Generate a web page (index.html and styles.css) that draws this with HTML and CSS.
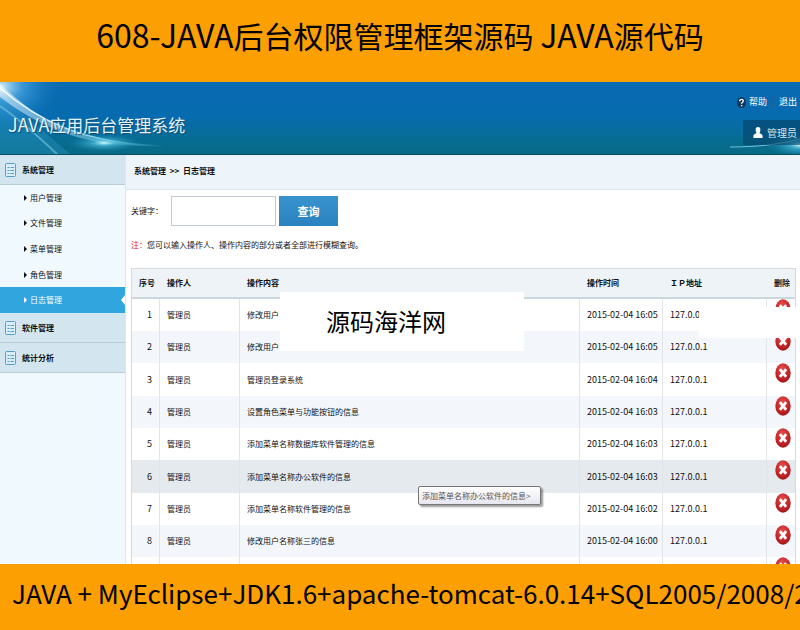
FILE: index.html
```html
<!DOCTYPE html>
<html lang="zh-CN">
<head>
    <meta charset="UTF-8">
    <meta name="viewport" content="width=device-width, initial-scale=1.0">
    <title>JAVA应用后台管理系统</title>
    <link rel="stylesheet" href="styles.css">
</head>
<body>
    <!-- Shared icons -->
    <svg class="sprite" aria-hidden="true">
        <defs>
            <radialGradient id="redBall" cx="45%" cy="30%" r="75%">
                <stop offset="0" stop-color="#e2504c"/>
                <stop offset="0.6" stop-color="#c5262a"/>
                <stop offset="1" stop-color="#9c1519"/>
            </radialGradient>
        </defs>
        <symbol id="delete" viewBox="0 0 16 20" preserveAspectRatio="none">
            <ellipse cx="8" cy="10" rx="7.7" ry="9.7" fill="url(#redBall)"/>
            <path d="M5.8 7.3 10.2 12.7M10.2 7.3 5.8 12.7" stroke="#fff" stroke-width="2.8" stroke-linecap="square"/>
        </symbol>
        <symbol id="list" viewBox="0 0 12 14">
            <rect x="0.5" y="0.5" width="10" height="13" rx="1" fill="#d9edf8" stroke="#5a9fc4"/>
            <path d="M2.5 4.5h2M2.5 7.5h2M2.5 10.5h2M5.5 4.5h3.5M5.5 7.5h3.5M5.5 10.5h3.5" stroke="#5a9fc4"/>
        </symbol>
    </svg>

    <div class="banner">
        <h1><span class="latin">608-JAVA</span>后台权限管理框架源码 <span class="latin">JAVA</span>源代码</h1>
    </div>

    <header class="header">
        <svg class="glow glow-left" viewBox="0 0 190 73" aria-hidden="true">
            <defs>
                <radialGradient id="corner" cx="0" cy="0.1" r="1">
                    <stop offset="0" stop-color="#e8f8ff" stop-opacity="0.95"/>
                    <stop offset="0.35" stop-color="#58b4ee" stop-opacity="0.6"/>
                    <stop offset="1" stop-color="#0a6db5" stop-opacity="0"/>
                </radialGradient>
                <radialGradient id="spark">
                    <stop offset="0" stop-color="#d8ffff" stop-opacity="0.95"/>
                    <stop offset="0.3" stop-color="#5fd0ee" stop-opacity="0.6"/>
                    <stop offset="1" stop-color="#1b8cb5" stop-opacity="0"/>
                </radialGradient>
                <linearGradient id="trail">
                    <stop offset="0" stop-color="#fff"/>
                    <stop offset="0.6" stop-color="#9fe4fa" stop-opacity="0.9"/>
                    <stop offset="1" stop-color="#4fc0e0" stop-opacity="0"/>
                </linearGradient>
            </defs>
            <rect width="65" height="45" fill="url(#corner)"/>
            <path d="M0 14C22 28 48 55 72 73H0Z" fill="#2f9bc9" opacity="0.35"/>
            <path d="M0 2C35 34 75 64 165 64 80 67 36 42 0 15Z" fill="url(#trail)" opacity="0.5"/>
            <path d="M0 6C35 36 80 62 165 64" fill="none" stroke="url(#trail)" stroke-width="1.5"/>
            <path d="M0 24C20 38 36 52 58 73" fill="none" stroke="#8fd4ec" stroke-width="2" opacity="0.5"/>
            <ellipse cx="104" cy="61" rx="36" ry="9" fill="url(#spark)"/>
        </svg>
        <svg class="glow glow-right" viewBox="0 0 70 24" aria-hidden="true">
            <ellipse cx="70" cy="15" rx="34" ry="12" fill="url(#spark)"/>
            <path d="M0 17C30 17 50 14 70 9" fill="none" stroke="#9fe4fa" opacity="0.7"/>
        </svg>
        <h2><span class="latin">JAVA</span>应用后台管理系统</h2>
        <div class="tools">
            <nav class="links">
                <a href="#help">
                    <svg width="9" height="11" viewBox="0 0 9 11" aria-hidden="true">
                        <ellipse cx="4.5" cy="5.5" rx="4.5" ry="5.5" fill="#15395a"/>
                        <path d="M2.7 4.2C2.7 1.6 6.4 1.8 6.3 4 6.2 5.2 4.6 5.3 4.6 6.8M4.6 8v1.3" fill="none" stroke="#fff" stroke-width="1.3"/>
                    </svg>帮助</a>
                <a href="#logout">退出</a>
            </nav>
            <div class="user">
                <svg width="10" height="11" viewBox="0 0 10 11" aria-hidden="true">
                    <path d="M5 0C7 0 7.6 1.6 7.3 3.4 7.1 4.8 6.6 5.2 6.6 6 7 7 9.6 6.8 9.6 9.3V11H0.4V9.3C0.4 6.8 3 7 3.4 6 3.4 5.2 2.9 4.8 2.7 3.4 2.4 1.6 3 0 5 0Z" fill="#fff"/>
                </svg>管理员</div>
        </div>
    </header>

    <div class="main">
        <aside class="sidebar">
            <h3><svg width="12" height="14"><use href="#list"/></svg>系统管理</h3>
            <ul>
                <li><a href="#user">用户管理</a></li>
                <li><a href="#file">文件管理</a></li>
                <li><a href="#menu">菜单管理</a></li>
                <li><a href="#role">角色管理</a></li>
                <li class="active"><a href="#log">日志管理</a></li>
            </ul>
            <h3><svg width="12" height="14"><use href="#list"/></svg>软件管理</h3>
            <h3><svg width="12" height="14"><use href="#list"/></svg>统计分析</h3>
        </aside>

        <section class="content">
            <div class="crumbs">系统管理 <span>&gt;&gt;</span> 日志管理</div>
            <form class="search">
                <label for="keyword">关键字：</label>
                <input type="text" id="keyword" name="keyword">
                <button type="submit">查询</button>
            </form>
            <p class="note"><span>注：</span>您可以输入操作人、操作内容的部分或者全部进行模糊查询。</p>

            <table>
                <colgroup>
                    <col class="col-no"><col class="col-user"><col><col class="col-time"><col class="col-ip"><col class="col-del">
                </colgroup>
                <thead>
                    <tr><th>序号</th><th>操作人</th><th>操作内容</th><th>操作时间</th><th>ＩＰ地址</th><th>删除</th></tr>
                </thead>
                <tbody>
                    <tr><td>1</td><td>管理员</td><td>修改用户</td><td>2015-02-04 16:05</td><td>127.0.0.1</td><td><button type="button" aria-label="删除"><svg width="16" height="20"><use href="#delete"/></svg></button></td></tr>
                    <tr><td>2</td><td>管理员</td><td>修改用户</td><td>2015-02-04 16:05</td><td>127.0.0.1</td><td><button type="button" aria-label="删除"><svg width="16" height="20"><use href="#delete"/></svg></button></td></tr>
                    <tr><td>3</td><td>管理员</td><td>管理员登录系统</td><td>2015-02-04 16:04</td><td>127.0.0.1</td><td><button type="button" aria-label="删除"><svg width="16" height="20"><use href="#delete"/></svg></button></td></tr>
                    <tr><td>4</td><td>管理员</td><td>设置角色菜单与功能按钮的信息</td><td>2015-02-04 16:03</td><td>127.0.0.1</td><td><button type="button" aria-label="删除"><svg width="16" height="20"><use href="#delete"/></svg></button></td></tr>
                    <tr><td>5</td><td>管理员</td><td>添加菜单名称数据库软件管理的信息</td><td>2015-02-04 16:03</td><td>127.0.0.1</td><td><button type="button" aria-label="删除"><svg width="16" height="20"><use href="#delete"/></svg></button></td></tr>
                    <tr class="hover"><td>6</td><td>管理员</td><td>添加菜单名称办公软件的信息</td><td>2015-02-04 16:03</td><td>127.0.0.1</td><td><button type="button" aria-label="删除"><svg width="16" height="20"><use href="#delete"/></svg></button></td></tr>
                    <tr><td>7</td><td>管理员</td><td>添加菜单名称软件管理的信息</td><td>2015-02-04 16:02</td><td>127.0.0.1</td><td><button type="button" aria-label="删除"><svg width="16" height="20"><use href="#delete"/></svg></button></td></tr>
                    <tr><td>8</td><td>管理员</td><td>修改用户名称张三的信息</td><td>2015-02-04 16:00</td><td>127.0.0.1</td><td><button type="button" aria-label="删除"><svg width="16" height="20"><use href="#delete"/></svg></button></td></tr>
                    <tr><td></td><td></td><td></td><td></td><td></td><td><button type="button" aria-label="删除"><svg width="16" height="20"><use href="#delete"/></svg></button></td></tr>
                </tbody>
            </table>

            <div class="watermark">源码海洋网</div>
            <div class="patch"></div>
            <div class="tooltip" role="tooltip">添加菜单名称办公软件的信息&gt;</div>
        </section>
    </div>

    <footer class="footer">JAVA + MyEclipse+JDK1.6+apache-tomcat-6.0.14+SQL2005/2008/20</footer>
</body>
</html>
```
FILE: styles.css
```css
/* Basic reset */
* {
    margin: 0;
    padding: 0;
    box-sizing: border-box;
}

body {
    display: flex;
    flex-direction: column;
    height: 100vh;
    overflow: hidden;
    font-family: "Noto Sans CJK SC", "Noto Sans", sans-serif;
    font-size: 8px;
    line-height: 12px;
    color: #111;
    background-color: #fff;
}

a {
    color: inherit;
    text-decoration: none;
}

svg {
    display: block;
    flex: none;
}

.sprite {
    position: absolute;
    width: 0;
    height: 0;
}

/* Orange bars */
.banner,
.footer {
    flex: none;
    background-color: #fc9f03;
    color: #000;
    white-space: nowrap;
    overflow: hidden;
}

.banner {
    height: 82px;
    padding-top: 12px;
    text-align: center;
}

.banner h1 {
    font-size: 30px;
    font-weight: normal;
    line-height: 44px;
}

.banner .latin {
    font-size: 32px;
}

.footer {
    padding: 11px 12px 19px;
    font-size: 26px;
    line-height: 36px;
}

/* Blue header */
.header {
    position: relative;
    flex: none;
    display: flex;
    justify-content: space-between;
    height: 73px;
    overflow: hidden;
    color: #fff;
    background: linear-gradient(#086ab0, #076bb0 45%, #076d97 75%, #076a84);
    border-bottom: 1px solid #0b4f66;
}

.glow {
    position: absolute;
}

.glow-left {
    left: 0;
    top: 0;
    width: 190px;
}

.glow-right {
    right: 0;
    bottom: 0;
    width: 70px;
}

.header h2 {
    position: relative;
    padding: 29px 0 0 8px;
    font-size: 17px;
    font-weight: normal;
    line-height: 26px;
    color: #e4f2fa;
    text-shadow: 1px 1px 1px #0a4c78;
}

.header .latin {
    font-size: 18px;
}

.tools {
    position: relative;
    display: flex;
    flex-direction: column;
    align-items: flex-end;
    gap: 12px;
    padding-top: 14px;
    font-size: 9px;
}

.links {
    display: flex;
    padding-right: 3px;
}

.links a {
    display: flex;
    align-items: center;
    gap: 3px;
}

.links a + a {
    margin-left: 5px;
    padding-left: 6px;
    border-left: 1px solid #1a5f96;
}

.user {
    display: flex;
    align-items: center;
    gap: 4px;
    height: 25px;
    padding: 0 3px 0 10px;
    color: #d5e5ee;
    font-size: 10px;
    background-color: rgba(5, 65, 105, 0.6);
}

/* Main area */
.main {
    flex: 1;
    display: flex;
    min-height: 0;
    overflow: hidden;
}

.sidebar {
    flex: none;
    width: 126px;
    background-color: #f0f9fe;
    border-right: 1px solid #dce8f0;
}

.sidebar h3 {
    display: flex;
    align-items: center;
    gap: 5px;
    height: 30px;
    padding-left: 5px;
    font-size: 8px;
    background-color: #d3e6f0;
    border-bottom: 1px solid #b9ccd6;
}

.sidebar ul {
    display: grid;
    grid-auto-rows: 1fr;
    height: 128px;
    list-style: none;
}

.sidebar li {
    position: relative;
    display: flex;
    align-items: center;
    padding-left: 24px;
}

.sidebar li a {
    display: flex;
    align-items: center;
    gap: 3px;
}

.sidebar li a::before {
    content: "";
    border: 3px solid transparent;
    border-left-color: currentColor;
    border-right: 0;
}

.sidebar .active {
    color: #fff;
    background-color: #31a5dd;
}

.sidebar .active::after {
    content: "";
    position: absolute;
    right: 0;
    border: 5px solid transparent;
    border-right: 4px solid #fff;
    border-left: 0;
}

.content {
    position: relative;
    flex: 1;
    min-width: 0;
}

.crumbs {
    height: 35px;
    padding: 10px 8px;
    font-weight: bold;
    background-color: #edf5fb;
    border-bottom: 1px solid #d8e4ec;
}

.crumbs span {
    margin: 0 2px;
}

.search {
    display: flex;
    align-items: center;
    padding: 6px 5px 0;
}

.search label {
    width: 40px;
}

.search input {
    width: 105px;
    height: 30px;
    padding: 0 4px;
    border: 1px solid #c3c9d2;
    font-size: 9px;
}

.search button {
    width: 59px;
    height: 30px;
    margin-left: 3px;
    border: 0;
    color: #fff;
    font-family: inherit;
    font-size: 11px;
    font-weight: bold;
    background: linear-gradient(#3993cd, #2a82bf);
    cursor: pointer;
}

.note {
    padding: 13px 5px 17px;
}

.note span {
    color: #e0211c;
}

/* Log table */
table {
    width: calc(100% - 9px);
    margin-left: 5px;
    table-layout: fixed;
    border-collapse: separate;
    border-spacing: 0;
    border: 1px solid #d3dae0;
}

.col-no {
    width: 28px;
}

.col-user {
    width: 80px;
}

.col-time {
    width: 83px;
}

.col-ip {
    width: 104px;
}

.col-del {
    width: 28px;
}

th {
    height: 30px;
    padding: 0 7px;
    text-align: left;
    white-space: nowrap;
    background-color: #eef3f7;
    border-bottom: 2px solid #ccd6dd;
}

td {
    height: 32px;
    padding: 0 7px;
    white-space: nowrap;
    border-right: 1px solid #e0e5e9;
}

tr:nth-child(3n) td {
    height: 33px;
}

td:first-child {
    text-align: right;
}

td:first-child,
td:nth-child(4),
td:nth-child(5) {
    font-size: 9px;
}

th:last-child,
td:last-child {
    padding: 0 0 0 8px;
}

th:last-child {
    padding-left: 7px;
}

td:last-child {
    vertical-align: top;
    border-right: 0;
}

td button {
    display: block;
    border: 0;
    background: none;
    cursor: pointer;
}

tbody tr:nth-child(even) {
    background-color: #f3f7fb;
}

tbody tr.hover {
    background-color: #e5eaef;
}

/* Boxes lying over the table */
.watermark {
    position: absolute;
    left: 154px;
    top: 137px;
    width: 244px;
    padding: 11px 46px 12px;
    color: #000;
    font-size: 24px;
    line-height: 36px;
    background-color: #fff;
}

.patch {
    position: absolute;
    right: 0;
    top: 152px;
    width: 101px;
    height: 31px;
    background-color: #fff;
}

.tooltip {
    position: absolute;
    left: 292px;
    top: 331px;
    padding: 3px 4px 2px 3px;
    min-width: 123px;
    color: #555;
    background: linear-gradient(#fff, #e6e6f0);
    border: 1px solid #767676;
    border-radius: 2px;
    box-shadow: 2px 2px 2px rgba(0, 0, 0, 0.4);
}
```
